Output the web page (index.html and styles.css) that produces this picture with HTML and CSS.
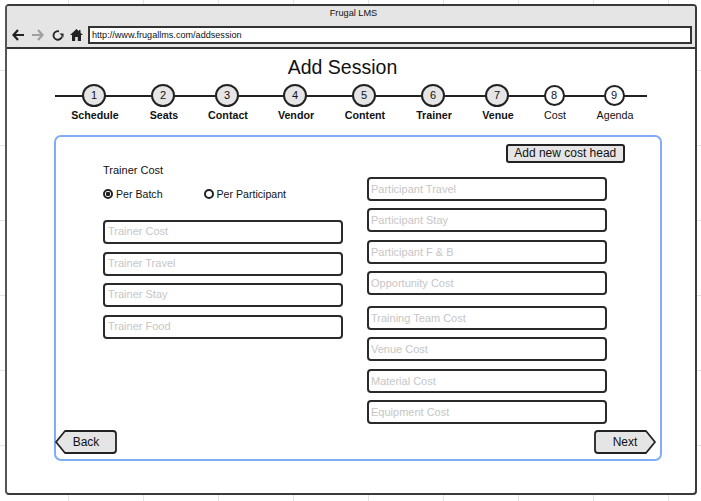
FILE: index.html
```html
<!DOCTYPE html>
<html lang="en">
<head>
<meta charset="utf-8">
<title>Frugal LMS</title>
<link rel="stylesheet" href="styles.css">
</head>
<body>
<div class="window">
  <header class="chrome">
    <div class="chrome-title">Frugal LMS</div>
    <div class="toolbar">
      <svg class="icon" width="13" height="12" viewBox="0 0 13 12"><path d="M6 1 1.500 6 6 11M2 6h10" fill="none" stroke="#222" stroke-width="2.200"/></svg>
      <svg class="icon" width="13" height="12" viewBox="0 0 13 12"><path d="M6 1l4.500 5L6 11M10 6H0" fill="none" stroke="#a0a0a0" stroke-width="2.200"/></svg>
      <svg class="icon reload" width="12" height="12" viewBox="0 0 12 12"><path d="M10 7.500A4.300 4.300 0 1 1 7 2.300" fill="none" stroke="#222" stroke-width="1.800"/><path d="M7.500 4.500 11.500 4.500 11.500 8.500z" fill="#222"/></svg>
      <svg class="icon" width="13" height="12" viewBox="0 0 13 12"><path d="M6.500 0 0 6h2v6h3.200V8h2.600v4H11V6h2l-2.500-2.300V1H9v1.300z" fill="#222"/></svg>
      <div class="url">http://www.frugallms.com/addsession</div>
    </div>
  </header>
  <main class="page">
    <h1 class="heading">Add Session</h1>
    <ol class="steps">
      <li class="step done"><span class="dot">1</span><span class="step-label">Schedule</span></li>
      <li class="step done"><span class="dot">2</span><span class="step-label">Seats</span></li>
      <li class="step done"><span class="dot">3</span><span class="step-label">Contact</span></li>
      <li class="step done"><span class="dot">4</span><span class="step-label">Vendor</span></li>
      <li class="step done"><span class="dot">5</span><span class="step-label">Content</span></li>
      <li class="step done"><span class="dot">6</span><span class="step-label">Trainer</span></li>
      <li class="step done"><span class="dot">7</span><span class="step-label">Venue</span></li>
      <li class="step"><span class="dot">8</span><span class="step-label">Cost</span></li>
      <li class="step"><span class="dot">9</span><span class="step-label">Agenda</span></li>
    </ol>
    <section class="panel">
      <div class="columns">
        <div class="col-left">
          <div class="cost-title">Trainer Cost</div>
          <div class="radios">
            <span class="radio checked">Per Batch</span>
            <span class="radio">Per Participant</span>
          </div>
          <div class="fields">
            <div class="field">Trainer Cost</div>
            <div class="field">Trainer Travel</div>
            <div class="field">Trainer Stay</div>
            <div class="field">Trainer Food</div>
          </div>
        </div>
        <div class="col-right">
          <div class="head-row"><button class="btn-head">Add new cost head</button></div>
          <div class="fields">
            <div class="field">Participant Travel</div>
            <div class="field">Participant Stay</div>
            <div class="field">Participant F &amp; B</div>
            <div class="field">Opportunity Cost</div>
          </div>
          <div class="fields lower">
            <div class="field">Training Team Cost</div>
            <div class="field">Venue Cost</div>
            <div class="field">Material Cost</div>
            <div class="field">Equipment Cost</div>
          </div>
        </div>
      </div>
      <div class="nav">
        <div class="nav-btn back">
          <svg class="nav-shape" width="62" height="24" viewBox="0 0 62 24"><path d="M10 1H58a3 3 0 0 1 3 3V20a3 3 0 0 1-3 3H10L1 12z" fill="#e5e5e5" stroke="#222" stroke-width="1.800" stroke-linejoin="round"/></svg>
          <span class="nav-text">Back</span>
        </div>
        <div class="nav-btn next">
          <svg class="nav-shape" width="62" height="24" viewBox="0 0 62 24"><path d="M52 1H4a3 3 0 0 0-3 3V20a3 3 0 0 0 3 3H52L61 12z" fill="#e5e5e5" stroke="#222" stroke-width="1.800" stroke-linejoin="round"/></svg>
          <span class="nav-text">Next</span>
        </div>
      </div>
    </section>
  </main>
</div>
</body>
</html>
```
FILE: styles.css
```css
* { box-sizing: border-box; }
html, body { margin: 0; padding: 0; }
body {
  width: 701px;
  height: 501px;
  overflow: hidden;
  padding: 4px 0 0 5px;
  font-family: "Liberation Sans", Arial, sans-serif;
  color: #111;
  background-color: #fff;
  background-image:
    linear-gradient(to right, #e4e4e4 1px, transparent 1px),
    linear-gradient(to bottom, #e4e4e4 1px, transparent 1px);
  background-size: 75px 75px;
  background-position: 68px 70px;
}
.window {
  width: 692px;
  height: 491px;
  background: #fff;
  border: 2px solid #3a3a3a;
  border-left-color: #555;
  border-radius: 4px;
  display: flex;
  flex-direction: column;
}
.chrome {
  height: 43px;
  background: #e5e5e5;
  border-bottom: 2px solid #333;
  border-radius: 2px 2px 0 0;
  flex: none;
}
.chrome-title {
  height: 14px;
  padding-left: 5px;
  font-size: 9.200px;
  line-height: 14px;
  text-align: center;
}
.toolbar {
  display: flex;
  align-items: center;
  height: 18px;
  margin-top: 6px;
  padding: 0 3px 0 5px;
}
.icon { flex: none; margin-right: 7px; }
.icon.reload { margin-right: 6px; }
.url {
  flex: 1;
  height: 18px;
  margin-left: -2px;
  background: #fff;
  border: 2px solid #333;
  font-size: 9.100px;
  line-height: 14px;
  padding-left: 2px;
}
.page { flex: 1; display: flex; flex-direction: column; }
.heading {
  margin: 7px 0 0;
  padding-right: 17px;
  font-size: 19.500px;
  font-weight: 400;
  line-height: 22px;
  height: 24px;
  text-align: center;
}
.steps {
  position: relative;
  display: flex;
  list-style: none;
  margin: 4px 0 0 48px;
  padding: 0;
  width: 592px;
}
.steps::before {
  content: "";
  position: absolute;
  left: 0;
  right: 0;
  top: 11px;
  height: 2px;
  background: #222;
}
.step {
  position: relative;
  display: flex;
  flex-direction: column;
  align-items: center;
  font-size: 10.700px;
}
.step:nth-child(1) { width: 78px; }
.step:nth-child(2) { width: 60px; }
.step:nth-child(3) { width: 68px; }
.step:nth-child(4) { width: 68px; }
.step:nth-child(5) { width: 70px; }
.step:nth-child(6) { width: 68px; }
.step:nth-child(7) { width: 60px; }
.step:nth-child(8) { width: 54px; }
.step:nth-child(9) { width: 66px; }
.dot {
  width: 21px;
  height: 21px;
  margin: 1px 0;
  border: 2px solid #222;
  border-radius: 50%;
  background: #fff;
  font-size: 11px;
  line-height: 17px;
  text-align: center;
}
.step.done .dot {
  width: 24px;
  height: 23px;
  margin: 0;
  background: #e5e5e5;
  line-height: 19px;
}
.step-label { margin: 2px 0 0 2px; line-height: 13px; white-space: nowrap; }
.step.done .step-label { font-weight: 700; }
.panel {
  width: 608px;
  height: 326px;
  margin: 13px 0 0 47px;
  border: 2px solid #80adf5;
  border-radius: 7px;
  display: flex;
  flex-direction: column;
  background: #fff;
}
.columns {
  display: flex;
  height: 287px;
  padding-left: 47px;
}
.col-left { width: 240px; padding-top: 26px; }
.col-right { width: 240px; margin-left: 24px; padding-top: 7px; }
.cost-title { font-size: 11px; line-height: 14px; }
.radios {
  display: flex;
  gap: 41px;
  margin-top: 10px;
  height: 14px;
  font-size: 10.600px;
  line-height: 14px;
}
.radio { display: flex; align-items: center; gap: 3px; }
.radio::before {
  content: "";
  box-sizing: border-box;
  width: 10px;
  height: 10px;
  border: 2px solid #222;
  border-radius: 50%;
  flex: none;
  background: #fff;
}
.radio.checked::before { background: radial-gradient(circle, #222 0 2px, #fff 2.500px); }
.radios + .fields { margin-top: 19px; gap: 7.500px; }
.head-row { display: flex; justify-content: flex-end; margin-right: -18px; }
.btn-head {
  width: 119.500px;
  height: 19px;
  padding: 0;
  font: 12px/15px "Liberation Sans", Arial, sans-serif;
  color: #111;
  background: #e5e5e5;
  border: 2px solid #222;
  border-radius: 3px;
}
.head-row + .fields { margin-top: 14px; }
.fields { display: flex; flex-direction: column; gap: 7.400px; }
.fields.lower { margin-top: 10.800px; }
.field {
  height: 24px;
  border: 2px solid #2a2a2a;
  border-radius: 4px;
  background: #fff;
  padding-left: 3px;
  font-size: 11px;
  line-height: 19px;
  color: #c6c6c6;
}
.col-right .field { line-height: 21px; padding-left: 2px; }
.nav {
  display: flex;
  justify-content: space-between;
  margin: 6px 4px 0 -1px;
}
.nav-btn { position: relative; width: 62px; height: 24px; }
.nav-shape { display: block; }
.nav-text {
  position: absolute;
  top: 4px;
  left: 0;
  right: 0;
  text-align: center;
  font-size: 12px;
  line-height: 16px;
}
```
